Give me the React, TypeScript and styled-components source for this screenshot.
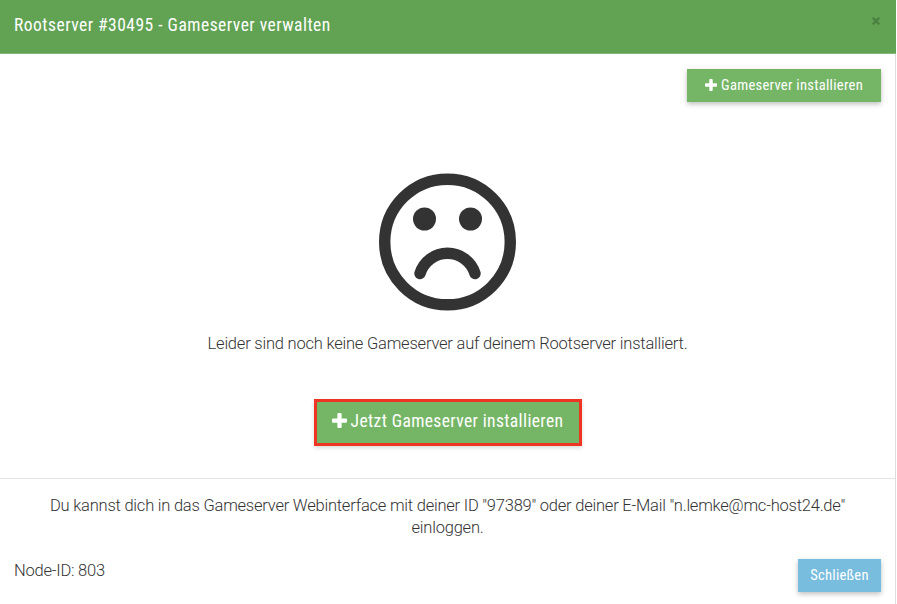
import React from 'react';
import styled, { createGlobalStyle } from 'styled-components';

const Global = createGlobalStyle`
  * { box-sizing: border-box; }
  body { margin: 0; background: #fff; }
`;

const Modal = styled.div`
  width: 896px;
  height: 604px;
  display: flex;
  flex-direction: column;
  overflow: hidden;
  font-family: Roboto, 'Liberation Sans', sans-serif;
  font-weight: 300;
  font-size: 16.5px;
  line-height: 22px;
  color: #333;
  background: #fff;
`;

const Header = styled.header`
  height: 54px;
  flex: none;
  display: flex;
  justify-content: space-between;
  padding: 13px 15px 0 14px;
  background: #61a253;
  border-bottom: 1px solid #82b877;
`;

const Title = styled.h1`
  margin: 0;
  font-size: 17.5px;
  font-weight: 400;
  font-stretch: 85%;
  line-height: 25px;
  color: #fff;
  white-space: nowrap;
`;

const Close = styled.button`
  width: 11px;
  height: 11px;
  margin-top: 2px;
  padding: 0;
  border: 0;
  background: none;
  display: grid;
  place-items: center;
`;

const Body = styled.main`
  height: 424px;
  flex: none;
  padding: 15px 14px 0 0;
  border-right: 1px solid #ddd;
  display: flex;
  flex-direction: column;
  align-items: center;
`;

const Button = styled.button<{ $w: number; $tone: string }>`
  width: ${p => p.$w}px;
  height: 33px;
  padding: 0 0 2px;
  border: 0;
  display: flex;
  align-items: center;
  justify-content: center;
  gap: 4px;
  background: ${p => p.$tone};
  color: #fff;
  font: 400 14.6px/20px Roboto, 'Liberation Sans', sans-serif;
  font-stretch: 85%;
  white-space: nowrap;
  box-shadow: 0 2px 5px rgba(0, 0, 0, 0.26);
`;

const InstallButton = styled(Button)`
  align-self: flex-end;
`;

const PrimaryButton = styled(Button)`
  height: 47px;
  margin: 44px 0 0 14px;
  padding-bottom: 4px;
  border: 3px solid #ee3524;
  font-size: 17.6px;
  box-shadow: 0 2px 4px rgba(0, 0, 0, 0.14);
`;

const Face = styled.svg`
  flex: none;
  margin: 71px 0 0 14px;
`;

const Message = styled.p`
  margin: 22px 0 0 14px;
  white-space: nowrap;
`;

const Label = styled.span<{ $spacing: number }>`
  letter-spacing: ${p => p.$spacing}px;
`;

const Footer = styled.footer`
  flex: 1;
  padding: 16px 14px 0;
  border-top: 1px solid #e3e3e3;
  border-right: 1px solid #ddd;
`;

const Hint = styled.p`
  margin: 0;
  text-align: center;
`;

const Actions = styled.div`
  margin-top: 20px;
  display: flex;
  justify-content: space-between;
  align-items: flex-start;
`;

const NodeId = styled.div`
  padding-top: 1px;
`;

const Plus = ({ size }: { size: number }) => (
  <svg width={size} height={size} viewBox="0 0 12 12" fill="#fff">
    <path d="M5.1 0h1.8q.8 0 .8.8v3.5h3.5q.8 0 .8.8v1.8q0 .8-.8.8H7.7v3.5q0 .8-.8.8H5.1q-.8 0-.8-.8V7.7H.8Q0 7.7 0 6.9V5.1q0-.8.8-.8h3.5V.8q0-.8.8-.8z" />
  </svg>
);

export default function App() {
  return (
    <>
      <Global />
      <Modal>
        <Header>
          <Title><Label $spacing={0.49}>Rootserver #30495 - Gameserver verwalten</Label></Title>
          <Close aria-label="Schließen">
            <svg width="8" height="8" viewBox="0 0 8 8" stroke="#4b7f40" strokeWidth="2.2">
              <path d="M.7.7l6.6 6.6M7.3.7L.7 7.3" />
            </svg>
          </Close>
        </Header>
        <Body>
          <InstallButton $w={194} $tone="#75b566">
            <Plus size={12} />
            <Label $spacing={0.27}>Gameserver installieren</Label>
          </InstallButton>
          <Face width="138" height="138" viewBox="0.5 0 138 138" fill="#333">
            <circle cx="69" cy="69" r="62.8" fill="none" stroke="#333" strokeWidth="11.4" />
            <circle cx="46" cy="46" r="11.5" />
            <circle cx="92" cy="46" r="11.5" />
            <path d="M41.5 100.5a28.8 28.8 0 0 1 55 0" fill="none" stroke="#333" strokeWidth="11.4" strokeLinecap="round" />
          </Face>
          <Message>
            <Label $spacing={-0.21}>Leider sind noch keine Gameserver auf deinem Rootserver installiert.</Label>
          </Message>
          <PrimaryButton $w={268} $tone="#75b566">
            <Plus size={15} />
            <Label $spacing={0.35}>Jetzt Gameserver installieren</Label>
          </PrimaryButton>
        </Body>
        <Footer>
          <Hint>
            <Label $spacing={-0.22}>
              Du kannst dich in das Gameserver Webinterface mit deiner ID "97389" oder deiner E-Mail "n.lemke@mc-host24.de"<br />
              einloggen.
            </Label>
          </Hint>
          <Actions>
            <NodeId><Label $spacing={-0.22}>Node-ID: 803</Label></NodeId>
            <Button $w={83} $tone="#78bddd">
              <Label $spacing={0.22}>Schließen</Label>
            </Button>
          </Actions>
        </Footer>
      </Modal>
    </>
  );
}
